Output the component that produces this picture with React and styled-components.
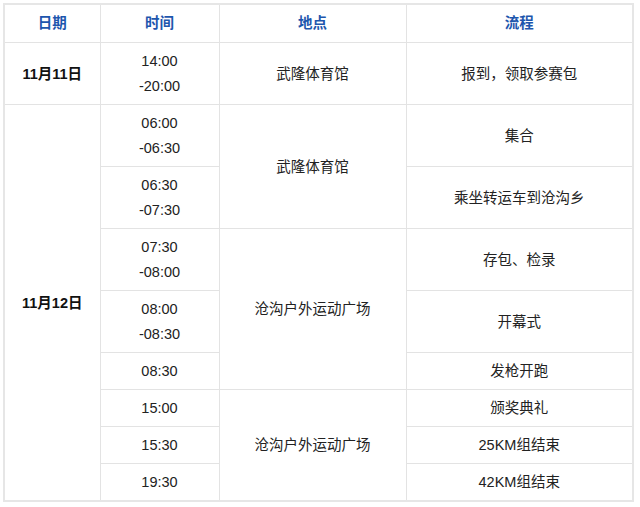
import styled, { createGlobalStyle } from "styled-components";

const Global = createGlobalStyle`
  html, body { margin: 0; padding: 0; background: #fff; }
  body { font-family: "Liberation Sans", "Noto Sans CJK SC", sans-serif; }
`;

const Wrap = styled.div`
  padding: 3px 6px 0 3px;
`;

const Table = styled.table`
  width: 631px;
  border-collapse: collapse;
  table-layout: fixed;
  border: 2px solid #e6e6e6;
  font-size: 14.5px;
  line-height: 24px;
  color: #222;
`;

const Th = styled.th`
  border: 1px solid #e3e3e3;
  padding: 6px 8px 7px;
  color: #1d56ad;
  font-weight: 700;
  font-size: 14.5px;
  text-align: center;
`;

const Td = styled.td`
  border: 1px solid #e3e3e3;
  padding: 6px 8px;
  text-align: center;
  vertical-align: middle;
  font-weight: ${(p) => (p.$bold ? 700 : 400)};
  color: ${(p) => (p.$bold ? "#111" : "#222")};
`;

const TimeLine = styled.div`
  line-height: ${(p) => (p.$multi ? "24.5px" : "24px")};
`;

const rows = [
  { date: "11月11日", dateSpan: 1, time: ["14:00", "-20:00"], place: "武隆体育馆", placeSpan: 1, step: "报到，领取参赛包" },
  { date: "11月12日", dateSpan: 8, time: ["06:00", "-06:30"], place: "武隆体育馆", placeSpan: 2, step: "集合" },
  { time: ["06:30", "-07:30"], step: "乘坐转运车到沧沟乡" },
  { time: ["07:30", "-08:00"], place: "沧沟户外运动广场", placeSpan: 3, step: "存包、检录" },
  { time: ["08:00", "-08:30"], step: "开幕式" },
  { time: ["08:30"], step: "发枪开跑" },
  { time: ["15:00"], place: "沧沟户外运动广场", placeSpan: 3, step: "颁奖典礼" },
  { time: ["15:30"], step: "25KM组结束" },
  { time: ["19:30"], step: "42KM组结束" },
];

export default function App() {
  return (
    <Wrap>
      <Global />
      <Table>
        <colgroup>
          <col style={{ width: 96 }} />
          <col style={{ width: 119 }} />
          <col style={{ width: 187 }} />
          <col />
        </colgroup>
        <thead>
          <tr>
            <Th>日期</Th>
            <Th>时间</Th>
            <Th>地点</Th>
            <Th>流程</Th>
          </tr>
        </thead>
        <tbody>
          {rows.map((r, i) => (
            <tr key={i}>
              {r.date && (
                <Td $bold rowSpan={r.dateSpan}>
                  {r.date}
                </Td>
              )}
              <Td>
                {r.time.map((t, j) => (
                  <TimeLine key={j} $multi={r.time.length > 1}>
                    {t}
                  </TimeLine>
                ))}
              </Td>
              {r.place && <Td rowSpan={r.placeSpan}>{r.place}</Td>}
              <Td>{r.step}</Td>
            </tr>
          ))}
        </tbody>
      </Table>
    </Wrap>
  );
}
